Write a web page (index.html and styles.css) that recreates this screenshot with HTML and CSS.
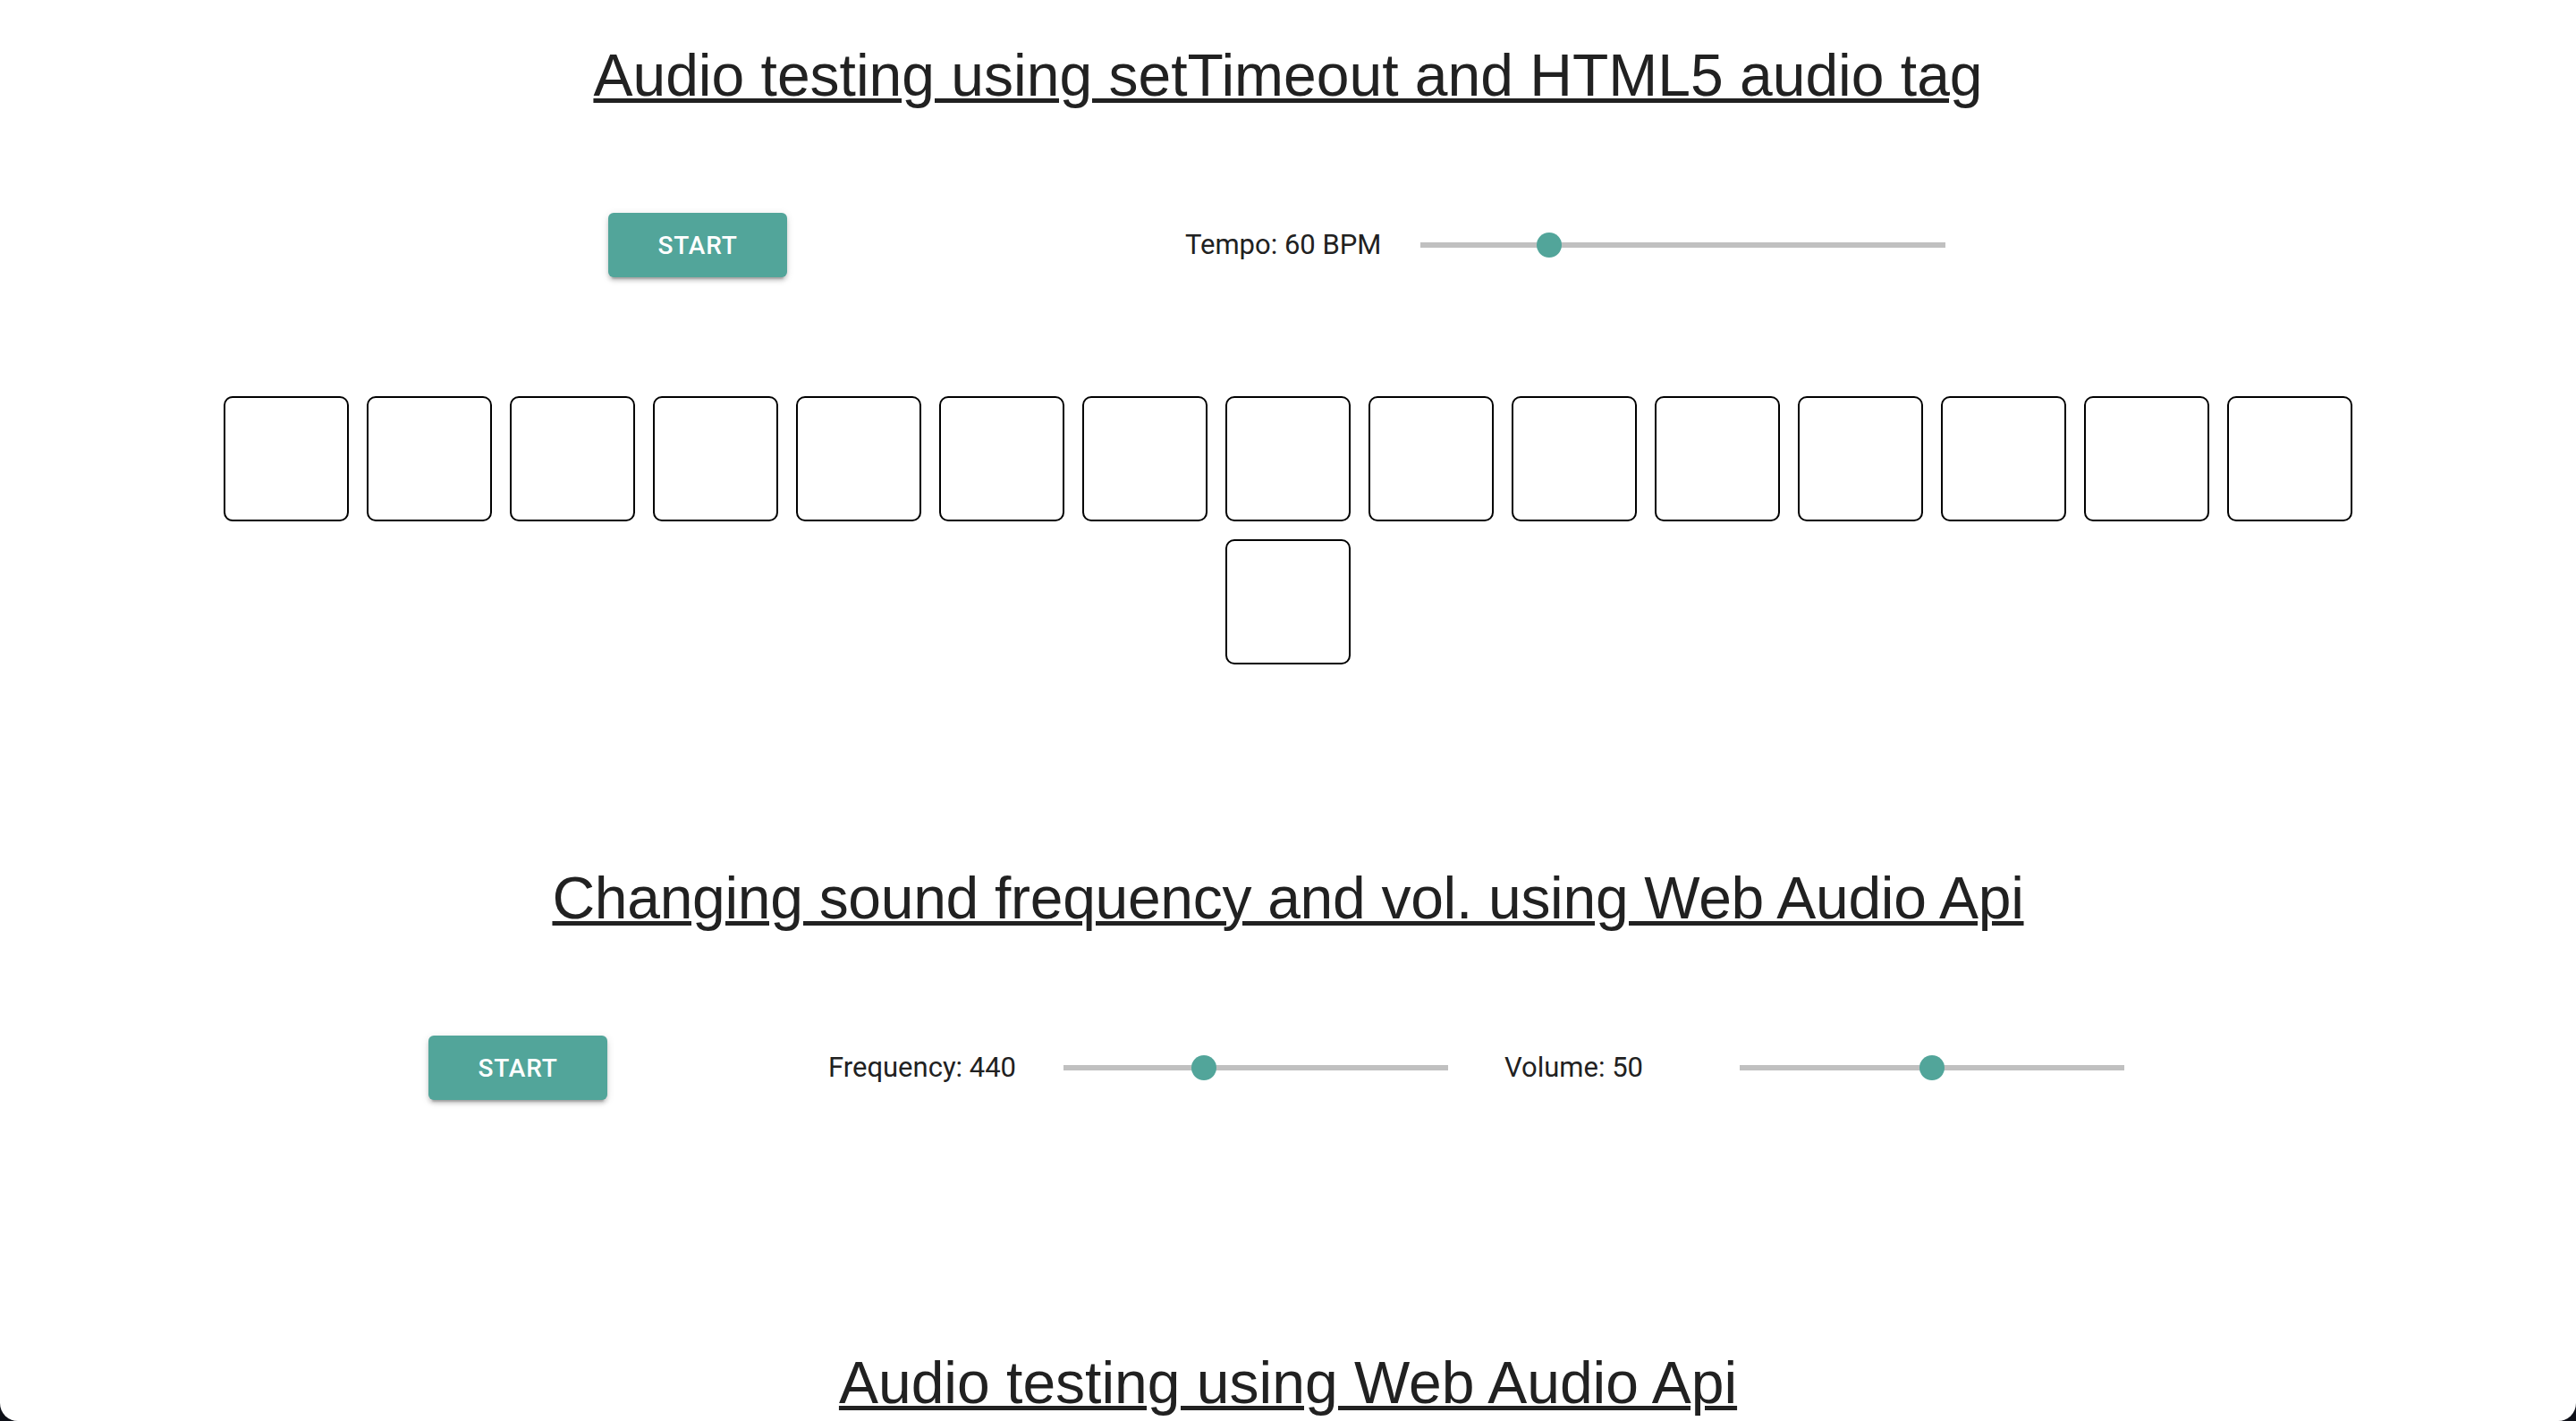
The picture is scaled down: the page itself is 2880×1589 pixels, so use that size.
FILE: index.html
```html
<!DOCTYPE html>
<html lang="en">
<head>
<meta charset="utf-8">
<title>Audio testing</title>
<link rel="stylesheet" href="styles.css">
</head>
<body>
<div class="page">
  <section class="section section-timeout">
    <h1 class="title">Audio testing using setTimeout and HTML5 audio tag</h1>
    <div class="controls controls-tempo">
      <button class="btn">Start</button>
      <div class="control control-first">
        <span class="label">Tempo: 60 BPM</span>
        <div class="slider slider-wide">
          <div class="track"></div>
          <div class="thumb" style="left: 24.5%"></div>
        </div>
      </div>
    </div>
    <div class="tiles">
      <div class="tile"></div><div class="tile"></div><div class="tile"></div><div class="tile"></div>
      <div class="tile"></div><div class="tile"></div><div class="tile"></div><div class="tile"></div>
      <div class="tile"></div><div class="tile"></div><div class="tile"></div><div class="tile"></div>
      <div class="tile"></div><div class="tile"></div><div class="tile"></div><div class="tile"></div>
    </div>
  </section>

  <section class="section section-webaudio">
    <h1 class="title title-tight">Changing sound frequency and vol. using Web Audio Api</h1>
    <div class="controls controls-freq">
      <button class="btn">Start</button>
      <div class="control control-first">
        <span class="label">Frequency: 440</span>
        <div class="slider slider-narrow">
          <div class="track"></div>
          <div class="thumb" style="left: 36.5%"></div>
        </div>
      </div>
      <div class="control control-next">
        <span class="label">Volume: 50</span>
        <div class="slider slider-narrow">
          <div class="track"></div>
          <div class="thumb" style="left: 50%"></div>
        </div>
      </div>
    </div>
  </section>

  <section class="section section-last">
    <h1 class="title">Audio testing using Web Audio Api</h1>
  </section>
</div>
</body>
</html>
```

FILE: styles.css
```css
html {
  background: #0e1018;
}

body {
  margin: 0;
  height: 1589px;
  overflow: hidden;
}

.page {
  box-sizing: border-box;
  height: 1589px;
  padding-top: 46px;
  background: #ffffff;
  border-bottom-left-radius: 20px;
  border-bottom-right-radius: 20px;
  overflow: hidden;
  color: rgba(0, 0, 0, 0.87);
}

.section {
  margin: 0;
}

.section-timeout {
  margin-bottom: 213px;
}

.section-webaudio {
  margin-bottom: 278px;
}

.title {
  margin: 0;
  font-family: "Liberation Sans", Arial, sans-serif;
  font-weight: 400;
  font-size: 66px;
  line-height: 76px;
  text-align: center;
  color: #212121;
  text-decoration: underline;
  text-decoration-thickness: 5px;
  text-underline-offset: 3px;
}

.title-tight {
  letter-spacing: -0.3px;
}

.controls {
  display: flex;
  align-items: center;
  height: 72px;
  margin-top: 116px;
}

.controls-tempo {
  padding-left: 680px;
}

.controls-freq {
  padding-left: 479px;
}

.btn {
  box-sizing: border-box;
  width: 200px;
  height: 72px;
  padding: 0;
  border: none;
  border-radius: 6px;
  background: #52a59a;
  color: #ffffff;
  font-family: Roboto, "Liberation Sans", sans-serif;
  font-weight: 500;
  font-size: 28px;
  letter-spacing: 0.8px;
  text-transform: uppercase;
  box-shadow: 0 6px 2px -4px rgba(0, 0, 0, 0.2), 0 4px 4px 0 rgba(0, 0, 0, 0.14), 0 2px 10px 0 rgba(0, 0, 0, 0.12);
}

.control {
  display: flex;
  align-items: center;
}

.controls-tempo .control-first {
  margin-left: 445px;
}

.controls-freq .control-first {
  margin-left: 247px;
}

.control-next {
  margin-left: 63px;
}

.label {
  width: 263px;
  font-family: Roboto, "Liberation Sans", sans-serif;
  font-size: 31px;
  line-height: 40px;
  color: #212121;
  white-space: nowrap;
}

.slider {
  position: relative;
  display: flex;
  align-items: center;
  height: 28px;
}

.slider-wide {
  width: 587px;
}

.slider-narrow {
  width: 430px;
}

.track {
  flex: 1;
  height: 6px;
  background: #c0c0c0;
}

.thumb {
  position: absolute;
  top: 0;
  width: 28px;
  height: 28px;
  margin-left: -14px;
  border-radius: 50%;
  background: #52a59a;
}

.tiles {
  display: flex;
  flex-wrap: wrap;
  justify-content: center;
  width: 2400px;
  margin: 123px auto 0;
}

.tile {
  box-sizing: border-box;
  width: 140px;
  height: 140px;
  margin: 10px;
  border: 2px solid #000000;
  border-radius: 10px;
  background: #ffffff;
}
```
